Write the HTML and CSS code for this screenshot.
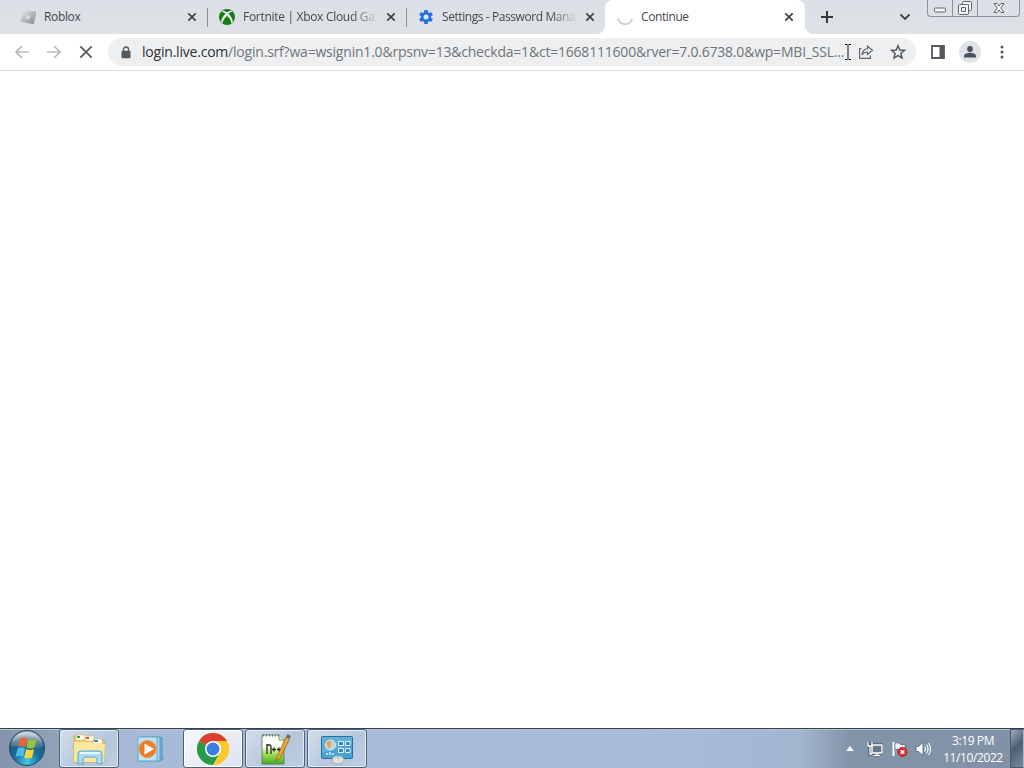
FILE: index.html
```
<!DOCTYPE html>
<html lang="en">
<head>
  <meta charset="UTF-8">
  <meta name="viewport" content="width=device-width, initial-scale=1.0">
  <title>Continue</title>
  <link rel="stylesheet" href="styles.css">
</head>
<body>
  <div class="tabstrip">
    <div class="tab">
      <svg class="favicon" viewBox="0 0 16 16">
        <defs><linearGradient id="silver" x2="1" y2="1"><stop stop-color="#e6e9ec"/><stop offset=".5" stop-color="#b5bac0"/><stop offset="1" stop-color="#858a92"/></linearGradient></defs>
        <path d="M3.5 1 16 2.500 13.500 15 .5 12z" fill="url(#silver)"/>
        <path d="M6.5 6.3 10 6.8 9.4 10.2 5.8 9.4z" fill="#d9dde2"/>
        <path d="M.5 12 13.500 15 16 2.500" fill="none" stroke="#9a9fa7" stroke-width=".7"/>
      </svg>
      <span class="title roblox">Roblox</span>
      <svg class="close" viewBox="0 0 10 10"><path d="M1.3 1.3 8.7 8.7M8.7 1.3 1.3 8.7"/></svg>
    </div>
    <div class="tab">
      <svg class="favicon" viewBox="0 0 16 16">
        <circle cx="8" cy="8" r="8" fill="#157c18"/>
        <path d="M3.3 1.8C5 1.6 6.7 2.4 8 3.3 9.3 2.4 11 1.6 12.7 1.8L13.6 2.7C12 2.4 10.8 3.5 9.6 4.8 12 7.3 14 10.3 13.8 13.3L12.4 14.6C12.6 12.3 10 8.8 8 7 6 8.8 3.4 12.3 3.6 14.6L2.2 13.3C2 10.3 4 7.3 6.4 4.8 5.2 3.5 4 2.4 2.4 2.7z" fill="#e7efe9"/>
      </svg>
      <span class="title fortnite">Fortnite | Xbox Cloud Ga</span>
      <svg class="close" viewBox="0 0 10 10"><path d="M1.3 1.3 8.7 8.7M8.7 1.3 1.3 8.7"/></svg>
    </div>
    <div class="tab plain">
      <svg class="favicon" viewBox="0 0 16 16">
        <g fill="#2470df">
          <circle cx="8" cy="8" r="5.2"/>
          <rect x="6.2" y="1" width="3.6" height="14" rx=".6"/>
          <rect x="6.2" y="1" width="3.6" height="14" rx=".6" transform="rotate(60 8 8)"/>
          <rect x="6.2" y="1" width="3.6" height="14" rx=".6" transform="rotate(120 8 8)"/>
        </g>
        <circle cx="8" cy="8" r="2.5" fill="#dee1e6"/>
      </svg>
      <span class="title settings">Settings - Password Mana</span>
      <svg class="close" viewBox="0 0 10 10"><path d="M1.3 1.3 8.7 8.7M8.7 1.3 1.3 8.7"/></svg>
    </div>
    <div class="tab active">
      <svg class="favicon" viewBox="0 0 16 16"><path d="M.8 9.5C1.8 13 4.6 15.200 8 15.200S14 13.400 15.200 10" fill="none" stroke="#c3c7d0" stroke-width="1.5"/></svg>
      <span class="title continue">Continue</span>
      <svg class="close" viewBox="0 0 10 10"><path d="M1.3 1.3 8.7 8.7M8.7 1.3 1.3 8.7"/></svg>
    </div>
    <svg class="new-tab" viewBox="0 0 12 12"><path d="M6 0V12M0 6H12"/></svg>
    <svg class="chevron" viewBox="0 0 12 8"><path d="M1.5 1.5 6 6 10.5 1.5"/></svg>
    <div class="window-buttons">
      <span><svg width="14" height="6"><rect x="1.5" y="1" width="11" height="4" rx="1"/></svg></span>
      <span><svg width="14" height="14"><path d="M4.500 3.500V1.500Q4.500 .5 5.500 .5H12.500Q13.500 .5 13.500 1.500V8.500Q13.500 9.500 12.500 9.500H10.500V3.500z"/><rect x=".5" y="3.500" width="10" height="10" rx="1"/><path d="M3.500 6.500H7.500V10.500H3.500z"/></svg></span>
      <span><svg width="12" height="12"><path d="M1 1.500H4L6 4 8 1.500H11L7.800 6 11 10.500H8L6 8 4 10.500H1L4.200 6z"/></svg></span>
    </div>
  </div>

  <div class="toolbar">
    <svg class="nav off" viewBox="0 0 16 16"><path d="M15 8H2M8 2 2 8 8 14"/></svg>
    <svg class="nav off" viewBox="0 0 16 16"><path d="M1 8H14M8 2 14 8 8 14"/></svg>
    <svg class="nav" viewBox="0 0 16 16"><path d="M2.3 2.3 13.7 13.7M13.7 2.3 2.3 13.7"/></svg>
    <div class="omnibox">
      <svg class="lock" viewBox="0 0 10 13"><path d="M2.5 6V3.5a2.5 2.5 0 0 1 5 0V6" fill="none" stroke="#55595e" stroke-width="1.4"/><rect x=".5" y="4.7" width="9" height="7.6" rx="1" fill="#55595e"/></svg>
      <span class="url"><b>login.live.com</b>/login.srf?wa=wsignin1.0&amp;rpsnv=13&amp;checkda=1&amp;ct=1668111600&amp;rver=7.0.6738.0&amp;wp=MBI_SSL...</span>
      <svg class="cursor" viewBox="0 0 8 16"><path d="M1 .5H3.500M4.500 .5H7M4 1V15M1 15.500H3.500M4.500 15.500H7"/></svg>
      <svg class="share" viewBox="0 0 16 16"><path d="M3.500 4.500H1.600V14.400H12.400V11.500M9.500 2.200 14.500 6.300 9.500 10.400V8C6.800 8 5.200 9 4 11 4.300 7.500 6.200 5 9.500 4.600z"/></svg>
      <svg class="star" viewBox="0 0 16 16"><path d="M8 1.8 9.8 6 14.4 6.4 10.9 9.4 12 13.9 8 11.5 4 13.900 5.100 9.400 1.600 6.400 6.200 6z"/></svg>
    </div>
    <svg class="panel" viewBox="0 0 14 14"><path d="M1 1H13V13H1z" fill="none" stroke="#55595e" stroke-width="1.8"/><path d="M8.5 1H13V13H8.5z" fill="#55595e"/></svg>
    <svg class="avatar" viewBox="0 0 22 22"><circle cx="11" cy="11" r="11" fill="#dfe2e6"/><circle cx="11" cy="8" r="2.9" fill="#48525b"/><path d="M5 16.6V15c0-2.3 3.5-3.3 6-3.3S17 12.7 17 15v1.6z" fill="#48525b"/></svg>
    <svg class="dots" viewBox="0 0 4 14"><circle cx="2" cy="2" r="1.5"/><circle cx="2" cy="7" r="1.5"/><circle cx="2" cy="12" r="1.5"/></svg>
  </div>

  <div class="page"></div>

  <div class="taskbar">
    <div class="start">
      <svg width="38" height="38" viewBox="0 0 38 38">
        <defs>
          <radialGradient id="orb" cx=".5" cy=".9" r=".9"><stop stop-color="#40cdea"/><stop offset=".4" stop-color="#176f9f"/><stop offset=".75" stop-color="#275777"/><stop offset="1" stop-color="#9fb7c9"/></radialGradient>
          <linearGradient id="shine" x2="0" y2="1"><stop stop-color="#fff" stop-opacity=".65"/><stop offset="1" stop-color="#fff" stop-opacity=".08"/></linearGradient>
        </defs>
        <circle cx="19" cy="19" r="17.5" fill="url(#orb)" stroke="#28485f"/>
        <path d="M3 18C3 9 10 3 19 3S35 9 35 18C27 22 12 15 3 18z" fill="url(#shine)"/>
        <path d="M12.2 9.500C14.800 8 17.300 8.500 19.300 9.700L17.400 18C15 16.600 12.600 16.600 10 18z" fill="#ed6535"/>
        <path d="M20.400 10.300C23 11.600 25.800 11.600 28.700 10L26.500 18.600C23.800 20 21 19.800 18.500 18.500z" fill="#9bc33b"/>
        <path d="M9.700 19.200C12.200 17.900 14.700 18 17.100 19.300L15.100 27.800C12.700 26.400 10.200 26.400 7.500 27.900z" fill="#4bbdeb"/>
        <path d="M18.300 20C20.900 21.300 23.400 21.300 26.200 19.900L24 28.500C21.400 30 18.700 29.800 16.100 28.400z" fill="#fbd13e"/>
      </svg>
    </div>
    <div class="task">
      <svg width="36" height="34" viewBox="0 0 36 34">
        <path d="M3 4H13L15 6H20L22 8H33V30H3z" fill="#e8cf76" stroke="#c9a94c"/>
        <path d="M5 3H14V8H5zM14 4H23V9H14zM22 7H31V12H22z" fill="#fffbe6" stroke="#d5b85e" stroke-width=".6"/>
        <path d="M6 4H9V6H6z" fill="#25a04a"/><path d="M15 5H18V7H15z" fill="#d55339"/><path d="M23 8H27V10H23z" fill="#3586ce"/>
        <path d="M3 10H20L22 12H34L33 30H3z" fill="#f8e8a0"/>
        <path d="M7 32V22Q7 19 10 19H28Q31 19 31 22V32H26V27Q26 25 23 25H15Q12 25 12 27V32z" fill="#a9dcf5" stroke="#56a7d6"/>
        <path d="M9 21H29" stroke="#e6f8ff" stroke-width="2"/>
      </svg>
    </div>
    <div class="pinned">
      <svg width="30" height="28" viewBox="0 0 30 28">
        <path d="M26 25 29 23 26 20z" fill="#8ba9c8"/>
        <path d="M8 3H26V25H8z" fill="#76b5d8" stroke="#4b91bc"/><path d="M5 2H24V26H5z" fill="#a6d5ed" stroke="#559bc4"/><path d="M2 2H21V26H2z" fill="#bfe2f4" stroke="#63a9ce"/>
        <circle cx="11.500" cy="14" r="8.600" fill="#ed7a24" stroke="#e59b5b"/><path d="M8.500 8.500 18 14 8.500 19.500z" fill="#fff"/>
      </svg>
    </div>
    <div class="task current">
      <svg width="32" height="32" viewBox="0 0 32 32">
        <circle cx="16" cy="16" r="16" fill="#fbc92b"/>
        <path d="M16 16 2.14 8A16 16 0 0 1 29.86 8z" fill="#dc4030"/>
        <path d="M2.14 8A16 16 0 0 0 16 32L22.9 20 16 16z" fill="#279b4a"/>
        <path d="M16 8H29.86A16 16 0 0 1 16 32L23 20z" fill="#fbc92b"/>
        <circle cx="16" cy="16" r="8" fill="#fff"/><circle cx="16" cy="16" r="6.5" fill="#3c7ce3"/>
      </svg>
    </div>
    <div class="task">
      <svg width="32" height="34" viewBox="0 0 32 34">
        <defs><linearGradient id="note" x2="0" y2="1"><stop offset=".4" stop-color="#fcfff7"/><stop offset=".65" stop-color="#a4dc55"/><stop offset="1" stop-color="#43ad22"/></linearGradient></defs>
        <path d="M3 3H20L25 8V32H3z" fill="url(#note)" stroke="#5b7055" stroke-width=".8"/><path d="M20 3V8H25" fill="#dce8cf" stroke="#809573"/>
        <path d="M4 3.5H20" stroke="#66726a" stroke-dasharray="1 2" stroke-width="2"/>
        <path d="M8 22V12M8 13H10.500Q12 13 12 15V22M13 17.500H17M15 15.500V19.500M18 17.500H22M20 15.500V19.500" fill="none" stroke="#222d20" stroke-width="1.3"/>
        <path d="M27 5 18 25 17 29 21 26.500 30.500 7z" fill="#e8a832" stroke="#9d6125" stroke-width=".8"/><path d="M27 5 28.500 2 32 4 30.500 7z" fill="#746680"/>
      </svg>
    </div>
    <div class="task">
      <svg width="34" height="32" viewBox="0 0 34 32">
        <rect x="1.5" y="3.5" width="31" height="22" rx="1" fill="#4ba3d3" stroke="#276f9f"/><path d="M2 4H32V11L2 20z" fill="#7abfdf" opacity=".5"/>
        <circle cx="10.500" cy="12" r="5" fill="#b3d8e7" stroke="#d9f0fa"/><path d="M11 13V7.500Q7 7 6.500 11L9 16z" fill="#f0a33e"/>
        <path d="M18.500 8.500H23.500V12.500H18.500zM25.500 8.500H30V12.500H25.500zM18.500 15.500H23.500V19.500H18.500zM25.500 15.500H30V19.500H25.500z" fill="#3b89ba" stroke="#d9f0fa"/>
        <path d="M7 22V20M10 22V19M13 22V20" stroke="#d9f0fa" stroke-width="1.5"/>
        <ellipse cx="18" cy="27" rx="6" ry="4.2" fill="#dcdfdf" stroke="#8e9b9e" stroke-width=".7"/><path d="M18 23V26" stroke="#a5acae"/>
      </svg>
    </div>
    <div class="tray">
      <svg width="8" height="5" viewBox="0 0 8 5"><path d="M0 5 4 0 8 5z" fill="#f3f6fa"/></svg>
      <svg class="network" width="16" height="16" viewBox="0 0 16 16"><path d="M5 4H15V12H5zM7 14.5H13M10 12V14M1 1V5H5V1M3 5V13H5" fill="none" stroke="#38485b" stroke-width="3"/><path d="M5 4H15V12H5z" fill="#667890" stroke="#fff" stroke-width="1.4"/><path d="M7 14.5H13M10 12V14M1 1V5H5V1M3 5V13H5" fill="none" stroke="#fff" stroke-width="1.4"/></svg>
      <svg class="flag" width="16" height="16" viewBox="0 0 16 16"><path d="M1.5 1V15" stroke="#fff" stroke-width="2"/><path d="M3 2Q6 1 8 3T13 3V10Q10 11 8 9T3 9z" fill="#f8fafb" stroke="#536177" stroke-width=".7"/><circle cx="10.5" cy="11" r="4.700" fill="#d52b31" stroke="#a32733" stroke-width=".6"/><path d="M8.7 9.2 12.3 12.8M12.3 9.2 8.7 12.8" stroke="#fff" stroke-width="1.5"/></svg>
      <svg class="sound" width="17" height="16" viewBox="0 0 17 16"><path d="M1 5.5H3.5L8 1.5V14.5L3.5 10.5H1z" fill="#f7f9fb" stroke="#546379" stroke-width=".8"/><path d="M9.500 5.500Q11.500 8 9.500 10.500M11.500 3.500Q14.500 8 11.500 12.500M13.500 2Q17.500 8 13.500 14" fill="none" stroke="#f3f6fa" stroke-width="1.2"/></svg>
      <div class="clock"><span class="time">3:19 PM</span><span class="date">11/10/2022</span></div>
      <div class="show-desktop"></div>
    </div>
  </div>
</body>
</html>
```
FILE: styles.css
```
* {
  box-sizing: border-box;
}

body {
  margin: 0;
  width: 1024px;
  height: 768px;
  display: flex;
  flex-direction: column;
  overflow: hidden;
  background: #fff;
  font-family: "Open Sans", "Noto Sans", sans-serif;
}

svg {
  display: block;
  flex: none;
}

.tabstrip {
  height: 34px;
  display: flex;
  padding-left: 8px;
  background: linear-gradient(#dcdfe5, #dee1e6);
}

.tab {
  width: 199px;
  height: 34px;
  display: flex;
  align-items: center;
  padding: 0 10px 0 12px;
  position: relative;
}

.tab:not(.active):not(.plain)::after {
  content: "";
  position: absolute;
  right: -1px;
  top: 8px;
  width: 1px;
  height: 19px;
  background: #8b8f96;
}

.tab.active {
  background: #fff;
  border-radius: 8px 8px 0 0;
  width: 200px;
}

/* rounded feet on both sides of the selected tab */
.tab.active::before,
.tab.active::after {
  content: "";
  position: absolute;
  bottom: 0;
  width: 8px;
  height: 8px;
}

.tab.active::before {
  left: -8px;
  background: radial-gradient(circle at 0 0, transparent 7.5px, #fff 8px);
}

.tab.active::after {
  right: -8px;
  background: radial-gradient(circle at 100% 0, transparent 7.5px, #fff 8px);
}

.favicon {
  width: 16px;
  height: 16px;
}

.title {
  flex: none;
  width: 134px;
  margin-left: 8px;
  font-size: 12px;
  line-height: 16px;
  color: #44474b;
  white-space: nowrap;
}

.roblox {
  letter-spacing: -0.35px;
}

.fortnite {
  letter-spacing: -0.3px;
}

.settings {
  letter-spacing: -0.42px;
}

.continue {
  width: 133px;
  letter-spacing: -0.4px;
}

/* long titles fade out before the close button */
.fortnite,
.settings {
  -webkit-mask-image: linear-gradient(to right, #000 108px, transparent 136px);
  mask-image: linear-gradient(to right, #000 108px, transparent 136px);
}

.close {
  width: 10px;
  height: 10px;
  margin-left: 9px;
  fill: none;
  stroke: #3f4347;
  stroke-width: 1.7;
}

.active .close {
  margin-left: 10px;
}

.new-tab {
  width: 12px;
  height: 12px;
  margin: 11px 0 0 16px;
  stroke: #34383c;
  stroke-width: 2;
}

.chevron {
  width: 12px;
  height: 8px;
  margin: 13px 0 0 66px;
  fill: none;
  stroke: #3f4347;
  stroke-width: 1.8;
}

.window-buttons {
  display: flex;
  width: 93px;
  height: 17px;
  margin-left: 16px;
  border: 1px solid #8b929b;
  border-top: 0;
  border-radius: 0 0 4px 4px;
}

.window-buttons span {
  width: 25px;
  display: flex;
  align-items: center;
  justify-content: center;
  border-right: 1px solid #8b929b;
}

.window-buttons span:first-child {
  padding-top: 4px;
}

.window-buttons span:last-child {
  width: 41px;
  border: 0;
}

.window-buttons svg {
  fill: #f4f5f7;
  stroke: #62676e;
}

.toolbar {
  height: 37px;
  display: flex;
  align-items: center;
  padding-left: 14px;
  border-bottom: 1px solid #dedfe1;
}

.nav {
  width: 16px;
  height: 16px;
  margin-right: 16px;
  fill: none;
  stroke: #55595e;
  stroke-width: 1.7;
}

.nav.off {
  stroke: #b9babd;
}

.omnibox {
  width: 808px;
  height: 28px;
  display: flex;
  align-items: center;
  margin-left: -2px;
  padding-left: 13px;
  border-radius: 14px;
  background: #edeff1;
}

.lock {
  width: 10px;
  height: 13px;
}

.url {
  flex: none;
  width: 702px;
  margin-left: 11px;
  font-size: 14px;
  line-height: 20px;
  letter-spacing: -0.21px;
  color: #707478;
  white-space: nowrap;
}

.url b {
  font-weight: 400;
  color: #2c2f32;
}

.cursor {
  width: 8px;
  height: 16px;
  fill: none;
  stroke: #111;
}

.share {
  width: 16px;
  height: 16px;
  margin-left: 6px;
  fill: none;
  stroke: #65696e;
  stroke-width: 1.2;
}

.star {
  width: 16px;
  height: 16px;
  margin-left: 16px;
  fill: none;
  stroke: #55595e;
  stroke-width: 1.5;
}

.panel {
  width: 14px;
  height: 14px;
  margin-left: 15px;
}

.avatar {
  width: 22px;
  height: 22px;
  margin-left: 14px;
}

.dots {
  width: 4px;
  height: 14px;
  margin-left: 19px;
  fill: #55595e;
}

.page {
  flex: 1;
}

.taskbar {
  height: 40px;
  display: flex;
  border-top: 1px solid #35404d;
  background: linear-gradient(to right, #8494aa 0, #91a2b8 55px, #a7bad5 120px, #a9bdda 650px, #a3b6d0 800px, #8393a8 850px, #8291a7 100%);
  box-shadow: inset 0 1px #b7c5d6;
}

.start {
  width: 59px;
  padding-left: 8px;
}

.task {
  width: 60px;
  height: 39px;
  margin-right: 2px;
  display: flex;
  align-items: center;
  justify-content: center;
  border: 1px solid #4f6079;
  border-radius: 3px;
  background: linear-gradient(135deg, #d3ddea, #b5c6dc 60%, #c0cfe2);
  box-shadow: inset 0 0 0 1px #e3eaf3;
}

.task.current {
  background: linear-gradient(135deg, #f5f7fa, #dce4ef);
  box-shadow: inset 0 0 0 1px #fff;
}

.pinned {
  width: 62px;
  display: flex;
  align-items: center;
  padding-left: 15px;
}

.tray {
  display: flex;
  align-items: center;
  margin-left: auto;
}

.network {
  margin-left: 13px;
}

.flag {
  margin-left: 9px;
}

.sound {
  margin-left: 7px;
}

.clock {
  width: 74px;
  margin-left: 4px;
  display: flex;
  flex-direction: column;
  align-items: center;
  font-size: 12px;
  line-height: 17px;
  letter-spacing: -0.4px;
  color: #fff;
}

.show-desktop {
  width: 14px;
  height: 39px;
  border: 1px solid #4d5b6d;
  border-right-color: #a9b7c8;
  background: linear-gradient(135deg, #a0aebf, #4e5e73 45%, #78889c);
}
```
